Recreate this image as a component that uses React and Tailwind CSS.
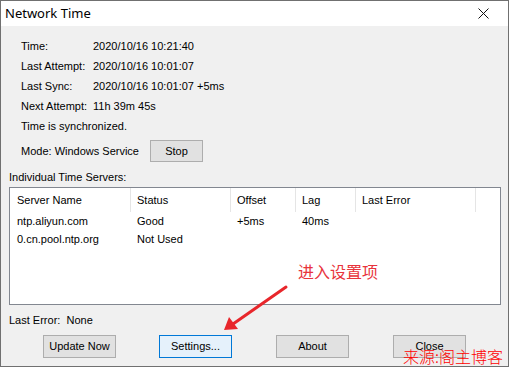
import React from 'react';

const info = [
  ['Time:', '2020/10/16 10:21:40'],
  ['Last Attempt:', '2020/10/16 10:01:07'],
  ['Last Sync:', '2020/10/16 10:01:07 +5ms'],
  ['Next Attempt:', '11h 39m 45s'],
];

const columns = [
  { label: 'Server Name', w: 'w-[121px] pl-[7px]' },
  { label: 'Status', w: 'w-[100px] pl-[6px]' },
  { label: 'Offset', w: 'w-[65px] pl-[6px]' },
  { label: 'Lag', w: 'w-[60px] pl-[6px]' },
  { label: 'Last Error', w: 'w-[120px] pl-[6px]' },
];

const servers = [
  ['ntp.aliyun.com', 'Good', '+5ms', '40ms', ''],
  ['0.cn.pool.ntp.org', 'Not Used', '', '', ''],
];

const WinButton = ({ children, focused, className = '' }) => (
  <button
    className={`h-[23px] w-[73px] border text-[11px] text-black ${
      focused ? 'bg-[#e5f1fb] border-[#0078d7]' : 'bg-[#e1e1e1] border-[#adadad]'
    } ${className}`}
  >
    {children}
  </button>
);

export default function App() {
  return (
    <div className="w-[509px] h-[367px] border border-[#707070] bg-[#f0f0f0] flex flex-col relative overflow-hidden font-['Liberation_Sans',Arial,sans-serif] text-[11px] text-black">
      {/* Title bar */}
      <div className="h-[25px] bg-white flex items-center justify-between shrink-0">
        <span className="pl-[4px] text-[13px] font-['Noto_Sans',sans-serif] leading-none">Network Time</span>
        <svg width="11" height="11" viewBox="0 0 11 11" className="mr-[19px]">
          <path d="M0.5 0.5 L10.5 10.5 M10.5 0.5 L0.5 10.5" stroke="#111" strokeWidth="1" fill="none" />
        </svg>
      </div>

      {/* Body */}
      <div className="flex flex-col pt-[10px]">
        <div className="pl-[20px]">
          {info.map(([k, v]) => (
            <div key={k} className="h-[20px] flex items-center">
              <span className="w-[72px]">{k}</span>
              <span>{v}</span>
            </div>
          ))}
          <div className="h-[21px] flex items-center">Time is synchronized.</div>
          <div className="mt-[3px] h-[22px] flex items-center">
            <span className="w-[129px]">Mode: Windows Service</span>
            <button className="h-[22px] w-[53px] bg-[#e1e1e1] border border-[#adadad] text-[11px]">Stop</button>
          </div>
        </div>

        <div className="pl-[8px] mt-[8px] h-[14px] flex items-center">Individual Time Servers:</div>

        {/* Server list */}
        <div className="ml-[8px] mt-[3px] w-[492px] h-[118px] border border-[#828790] bg-white">
          <div className="flex h-[24px]">
            {columns.map((c) => (
              <div key={c.label} className={`${c.w} h-full flex items-center border-r border-[#e5e5e5]`}>
                {c.label}
              </div>
            ))}
          </div>
          {servers.map((row) => (
            <div key={row[0]} className="flex h-[18px] items-center">
              {row.map((cell, i) => (
                <div key={i} className={`${columns[i].w} border-r border-transparent`}>
                  {cell}
                </div>
              ))}
            </div>
          ))}
        </div>

        <div className="pl-[8px] mt-[8px] h-[14px] flex items-center">Last Error:&nbsp; None</div>

        <div className="mt-[8px] flex pl-[42px]">
          <WinButton>Update Now</WinButton>
          <WinButton focused className="ml-[43px]">Settings...</WinButton>
          <WinButton className="ml-[44px]">About</WinButton>
          <WinButton className="ml-[44px]">Close</WinButton>
        </div>
      </div>

      {/* Annotation */}
      <span className="absolute left-[297px] top-[262px] text-[16px] leading-none text-[#e8343c] font-['Noto_Sans_CJK_SC',sans-serif]">
        进入设置项
      </span>
      <svg className="absolute left-0 top-0 pointer-events-none" width="509" height="367">
        <line x1="285" y1="286" x2="232" y2="323" stroke="#e8262b" strokeWidth="3" strokeLinecap="round" />
        <polygon points="223,329 228,316 237,328" fill="#e8262b" />
      </svg>
      <span className="absolute left-[402px] top-[347px] text-[16px] leading-none text-[#ff0000] font-['Noto_Sans_CJK_SC',sans-serif] font-light">
        来源:阁主博客
      </span>
    </div>
  );
}
